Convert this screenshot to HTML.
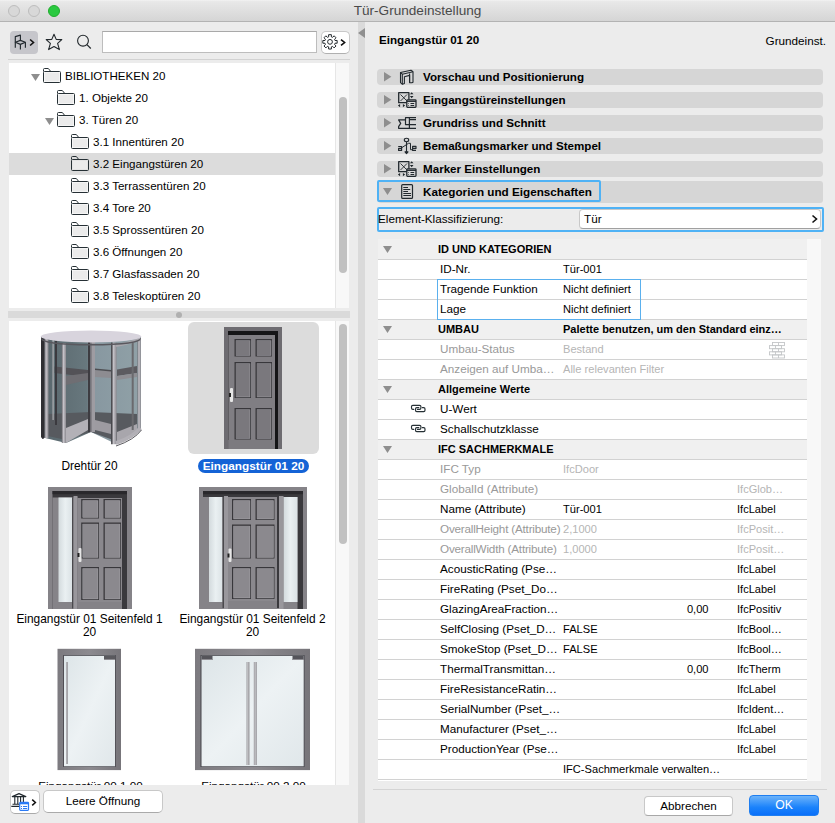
<!DOCTYPE html><html><head><meta charset="utf-8"><title>Tür-Grundeinstellung</title><style>
*{margin:0;padding:0;box-sizing:border-box}
html,body{width:835px;height:823px;overflow:hidden}
body{background:#ececec;font-family:"Liberation Sans",sans-serif;color:#000;position:relative;font-size:11.7px}
.a{position:absolute;white-space:nowrap}
.t{position:absolute;white-space:nowrap;line-height:20px}
svg{position:absolute;overflow:visible}
</style></head><body>
<div class="a" style="left:0;top:0;width:835px;height:22px;background:linear-gradient(#f3f3f3,#e8e8e8 8%,#d5d5d5);border-bottom:1px solid #b3b3b3"></div>
<div class="a" style="left:8px;top:5px;width:12px;height:12px;border-radius:50%;background:#d8d8d8;border:1px solid #bdbdbd"></div>
<div class="a" style="left:28px;top:5px;width:12px;height:12px;border-radius:50%;background:#d8d8d8;border:1px solid #bdbdbd"></div>
<div class="a" style="left:48px;top:5px;width:12px;height:12px;border-radius:50%;background:#2ac940;border:1px solid #1fad2c"></div>
<div class="a" style="left:0;top:0;width:835px;line-height:22px;text-align:center;font-size:13.6px;color:#4a4a4a">Tür-Grundeinstellung</div>
<div class="a" style="left:10px;top:31px;width:28px;height:23px;border-radius:4px;background:#c6c6cb"></div>
<svg style="left:10px;top:31px" width="28" height="23" viewBox="0 0 28 23"><g fill="none" stroke="#22292e" stroke-width="1.15" stroke-linejoin="round"><path d="M5.3 11.2V5.6L10.4 4.1V9.4"/><path d="M5.3 11.2L10.4 9.4L15.4 11.2L10.4 13.4Z"/><path d="M5.3 11.2V16.7M10.4 13.4V18.6M15.4 11.2V16.7"/></g><path d="M20.1 8.5L23.5 11.5L20.1 14.5" fill="none" stroke="#111" stroke-width="1.6"/></svg>
<svg style="left:44px;top:32px" width="20" height="20" viewBox="0 0 20 20"><path d="M10 2.2L12.2 7.4L17.8 7.6L13.6 11.4L15.4 17.6L10 14.5L4.6 17.6L6.4 11.4L2.2 7.6L7.8 7.4Z" fill="none" stroke="#22282c" stroke-width="1.1" stroke-linejoin="round"/></svg>
<svg style="left:74px;top:32px" width="20" height="20" viewBox="0 0 20 20"><circle cx="9" cy="8.7" r="5.4" fill="none" stroke="#22282c" stroke-width="1.1"/><path d="M12.9 12.6L16.8 16.5" stroke="#22282c" stroke-width="1.2"/></svg>
<div class="a" style="left:102px;top:31px;width:215px;height:22px;background:#fff;border:1px solid #bdbdbd;border-top-color:#a9a9a9"></div>
<div class="a" style="left:320.5px;top:30.5px;width:29px;height:23px;border-radius:5px;background:#fff;border:1px solid #c8c8c8;border-bottom-color:#b0b0b0"></div>
<svg style="left:321px;top:31px" width="28" height="23" viewBox="0 0 28 23"><g fill="none" stroke="#22282c" stroke-width="1"><circle cx="9" cy="10.85" r="2.4"/><path d="M7.01 6.04 L7.65 5.83 L7.61 3.68 L10.39 3.68 L10.35 5.83 L10.99 6.05 L11.60 6.35 L13.08 4.80 L15.05 6.77 L13.50 8.25 L13.81 8.86 L14.02 9.50 L16.17 9.46 L16.17 12.24 L14.02 12.20 L13.80 12.84 L13.50 13.45 L15.05 14.93 L13.08 16.90 L11.60 15.35 L10.99 15.66 L10.35 15.87 L10.39 18.02 L7.61 18.02 L7.65 15.87 L7.01 15.65 L6.40 15.35 L4.92 16.90 L2.95 14.93 L4.50 13.45 L4.19 12.84 L3.98 12.20 L1.83 12.24 L1.83 9.46 L3.98 9.50 L4.20 8.86 L4.50 8.25 L2.95 6.77 L4.92 4.80 L6.40 6.35Z"/></g><path d="M20 8.6L23.6 11.5L20 14.4" fill="none" stroke="#111" stroke-width="1.6"/></svg>
<div class="a" style="left:8px;top:59px;width:342px;height:1px;background:#d2d2d2"></div>
<div class="a" style="left:9px;top:63px;width:327px;height:245px;background:#fff"></div>
<div class="a" style="left:335px;top:63px;width:14px;height:245px;background:#f8f8f8;border-left:1px solid #e6e6e6"></div>
<div class="a" style="left:339px;top:97px;width:8px;height:176px;border-radius:4px;background:#c1c1c1"></div>
<div class="a" style="left:9px;top:153px;width:326px;height:22px;background:#dcdcdc"></div>
<svg style="left:43px;top:68px" width="18" height="15" viewBox="0 0 18 15"><rect x="1.5" y="4.5" width="15" height="9" fill="#ebebeb"/><g fill="none" stroke="#263035" stroke-width="1"><path d="M0.5 3.5V1.5Q0.5 0.5 1.5 0.5H5.3L7.8 3.5"/><rect x="0.5" y="3.5" width="17" height="11" rx="1"/></g></svg>
<svg style="left:30.5px;top:73.5px" width="9" height="7"><path d="M0 0H9L4.5 7Z" fill="#8e8e8e"/></svg>
<div class="a" style="left:65px;top:65px;line-height:22px;font-size:11.6px">BIBLIOTHEKEN 20</div>
<svg style="left:57px;top:90px" width="18" height="15" viewBox="0 0 18 15"><rect x="1.5" y="4.5" width="15" height="9" fill="#ebebeb"/><g fill="none" stroke="#263035" stroke-width="1"><path d="M0.5 3.5V1.5Q0.5 0.5 1.5 0.5H5.3L7.8 3.5"/><rect x="0.5" y="3.5" width="17" height="11" rx="1"/></g></svg>
<div class="a" style="left:79px;top:87px;line-height:22px;font-size:11.6px">1. Objekte 20</div>
<svg style="left:57px;top:112px" width="18" height="15" viewBox="0 0 18 15"><rect x="1.5" y="4.5" width="15" height="9" fill="#ebebeb"/><g fill="none" stroke="#263035" stroke-width="1"><path d="M0.5 3.5V1.5Q0.5 0.5 1.5 0.5H5.3L7.8 3.5"/><rect x="0.5" y="3.5" width="17" height="11" rx="1"/></g></svg>
<svg style="left:44.5px;top:117.5px" width="9" height="7"><path d="M0 0H9L4.5 7Z" fill="#8e8e8e"/></svg>
<div class="a" style="left:79px;top:109px;line-height:22px;font-size:11.6px">3. Türen 20</div>
<svg style="left:71px;top:134px" width="18" height="15" viewBox="0 0 18 15"><rect x="1.5" y="4.5" width="15" height="9" fill="#ebebeb"/><g fill="none" stroke="#263035" stroke-width="1"><path d="M0.5 3.5V1.5Q0.5 0.5 1.5 0.5H5.3L7.8 3.5"/><rect x="0.5" y="3.5" width="17" height="11" rx="1"/></g></svg>
<div class="a" style="left:93px;top:131px;line-height:22px;font-size:11.6px">3.1 Innentüren 20</div>
<svg style="left:71px;top:156px" width="18" height="15" viewBox="0 0 18 15"><rect x="1.5" y="4.5" width="15" height="9" fill="#ebebeb"/><g fill="none" stroke="#263035" stroke-width="1"><path d="M0.5 3.5V1.5Q0.5 0.5 1.5 0.5H5.3L7.8 3.5"/><rect x="0.5" y="3.5" width="17" height="11" rx="1"/></g></svg>
<div class="a" style="left:93px;top:153px;line-height:22px;font-size:11.6px">3.2 Eingangstüren 20</div>
<svg style="left:71px;top:178px" width="18" height="15" viewBox="0 0 18 15"><rect x="1.5" y="4.5" width="15" height="9" fill="#ebebeb"/><g fill="none" stroke="#263035" stroke-width="1"><path d="M0.5 3.5V1.5Q0.5 0.5 1.5 0.5H5.3L7.8 3.5"/><rect x="0.5" y="3.5" width="17" height="11" rx="1"/></g></svg>
<div class="a" style="left:93px;top:175px;line-height:22px;font-size:11.6px">3.3 Terrassentüren 20</div>
<svg style="left:71px;top:200px" width="18" height="15" viewBox="0 0 18 15"><rect x="1.5" y="4.5" width="15" height="9" fill="#ebebeb"/><g fill="none" stroke="#263035" stroke-width="1"><path d="M0.5 3.5V1.5Q0.5 0.5 1.5 0.5H5.3L7.8 3.5"/><rect x="0.5" y="3.5" width="17" height="11" rx="1"/></g></svg>
<div class="a" style="left:93px;top:197px;line-height:22px;font-size:11.6px">3.4 Tore 20</div>
<svg style="left:71px;top:222px" width="18" height="15" viewBox="0 0 18 15"><rect x="1.5" y="4.5" width="15" height="9" fill="#ebebeb"/><g fill="none" stroke="#263035" stroke-width="1"><path d="M0.5 3.5V1.5Q0.5 0.5 1.5 0.5H5.3L7.8 3.5"/><rect x="0.5" y="3.5" width="17" height="11" rx="1"/></g></svg>
<div class="a" style="left:93px;top:219px;line-height:22px;font-size:11.6px">3.5 Sprossentüren 20</div>
<svg style="left:71px;top:244px" width="18" height="15" viewBox="0 0 18 15"><rect x="1.5" y="4.5" width="15" height="9" fill="#ebebeb"/><g fill="none" stroke="#263035" stroke-width="1"><path d="M0.5 3.5V1.5Q0.5 0.5 1.5 0.5H5.3L7.8 3.5"/><rect x="0.5" y="3.5" width="17" height="11" rx="1"/></g></svg>
<div class="a" style="left:93px;top:241px;line-height:22px;font-size:11.6px">3.6 Öffnungen 20</div>
<svg style="left:71px;top:266px" width="18" height="15" viewBox="0 0 18 15"><rect x="1.5" y="4.5" width="15" height="9" fill="#ebebeb"/><g fill="none" stroke="#263035" stroke-width="1"><path d="M0.5 3.5V1.5Q0.5 0.5 1.5 0.5H5.3L7.8 3.5"/><rect x="0.5" y="3.5" width="17" height="11" rx="1"/></g></svg>
<div class="a" style="left:93px;top:263px;line-height:22px;font-size:11.6px">3.7 Glasfassaden 20</div>
<svg style="left:71px;top:288px" width="18" height="15" viewBox="0 0 18 15"><rect x="1.5" y="4.5" width="15" height="9" fill="#ebebeb"/><g fill="none" stroke="#263035" stroke-width="1"><path d="M0.5 3.5V1.5Q0.5 0.5 1.5 0.5H5.3L7.8 3.5"/><rect x="0.5" y="3.5" width="17" height="11" rx="1"/></g></svg>
<div class="a" style="left:93px;top:285px;line-height:22px;font-size:11.6px">3.8 Teleskoptüren 20</div>
<div class="a" style="left:8px;top:311px;width:342px;height:7px;background:#dadada"></div>
<div class="a" style="left:176px;top:311px;width:6px;height:6px;border-radius:50%;background:#b0b0b0;top:311.5px"></div>
<div class="a" style="left:9px;top:321px;width:327px;height:464px;background:#fff"></div>
<div class="a" style="left:335px;top:321px;width:14px;height:464px;background:#f8f8f8;border-left:1px solid #e6e6e6"></div>
<div class="a" style="left:339px;top:324px;width:8px;height:220px;border-radius:4px;background:#c1c1c1"></div>
<div class="a" style="left:187.7px;top:322px;width:131.6px;height:131.5px;border-radius:6px;background:#dcdcdc"></div>
<div class="a" style="left:8px;top:459px;width:163px;text-align:center;line-height:14px;font-size:11.9px">Drehtür 20</div>
<div class="a" style="left:198px;top:459.3px;width:111px;height:13.4px;border-radius:7px;background:#1463d6"></div>
<div class="a" style="left:172px;top:459.6px;width:163px;text-align:center;line-height:13px;color:#fff;font-weight:bold;font-size:11.8px">Eingangstür 01 20</div>
<div class="a" style="left:8px;top:613px;width:163px;text-align:center;line-height:13.2px;white-space:normal;font-size:11.9px">Eingangstür 01 Seitenfeld 1<br>20</div>
<div class="a" style="left:171px;top:613px;width:163px;text-align:center;line-height:13.2px;white-space:normal;font-size:11.9px">Eingangstür 01 Seitenfeld 2<br>20</div>
<div class="a" style="left:9px;top:321px;width:327px;height:464px;overflow:hidden"><div class="a" style="left:0;top:458px;width:163px;text-align:center;line-height:14px">Eingangstür 00 1 00</div><div class="a" style="left:163px;top:458px;width:163px;text-align:center;line-height:14px">Eingangstür 00 2 00</div></div>
<svg style="left:0;top:0" width="835" height="823" viewBox="0 0 835 823"><linearGradient id="dg" x1="0" x2="1"><stop offset="0" stop-color="#58666c"/><stop offset="0.46" stop-color="#68787e"/><stop offset="0.5" stop-color="#8797a0"/><stop offset="1" stop-color="#90a1a7"/></linearGradient><linearGradient id="pg" x1="0" x2="1"><stop offset="0" stop-color="#6e6c72"/><stop offset="0.4" stop-color="#c4c2c8"/><stop offset="1" stop-color="#8c8a90"/></linearGradient><path d="M41 337V437L66 443L91 432L116 444Q132 438 141 430V337Z" fill="url(#dg)"/><path d="M48 414L91 412L137 414V428Q120 440 116 441L91 432L66 440L48 436Z" fill="#575a5f"/><path d="M54.5 366.5L88 370V377L54.5 373Z" fill="#535257"/><path d="M66 376L88 373V380L66 385Z" fill="#6f6e73"/><path d="M95 370L111 371V378L95 377Z" fill="#8d8c91"/><path d="M95 368.5L111 370V371.5L95 370Z" fill="#4e4e52"/><path d="M117 369.5L137 366V373L117 376Z" fill="#5c5b60"/><path d="M117 376L137 373V377L117 380Z" fill="#8e8d92"/><rect x="88" y="341" width="2.5" height="91" fill="#3d3c41"/><rect x="90.5" y="341" width="4.5" height="91" fill="#9e9ca2"/><rect x="90.5" y="341" width="1" height="91" fill="#6a696e"/><path d="M66 428L88 419V430L66 443Z" fill="#b3b1b7"/><path d="M95 420L111 424V434L95 430Z" fill="#9d9ba1"/><path d="M117 432L137 424V430Q130 438 117 442Z" fill="#a8a6ac"/><path d="M41 337H44.5V436Q44.5 439 42.5 439L41 437Z" fill="#2f2f33"/><rect x="44.5" y="338" width="4" height="100" fill="url(#pg)"/><rect x="52.5" y="340" width="1.2" height="80" fill="#b0b0b4"/><rect x="55" y="341" width="2" height="84" fill="#3b3a3f"/><rect x="61.8" y="343" width="4.2" height="100" fill="url(#pg)"/><rect x="111.3" y="342.6" width="5.3" height="101.6" fill="url(#pg)"/><rect x="111.3" y="342.6" width="1" height="101.6" fill="#3a393e"/><rect x="131.7" y="342" width="2" height="88" fill="#6a6a6e"/><rect x="137.5" y="338" width="3.3" height="92" fill="url(#pg)"/><path d="M116 443Q132 438 140.5 428" fill="none" stroke="#b2b0b6" stroke-width="3.5"/><path d="M116 446Q134 440 141.5 430" fill="none" stroke="#5a595e" stroke-width="1"/><path d="M116 345.5Q131 343 140.5 338.5" fill="none" stroke="#a9a7ad" stroke-width="3"/><path d="M41 337Q41 344 91 344Q141 344 141 337V338.6Q141 345.6 91 345.6Q41 345.6 41 338.6Z" fill="#59585e"/><ellipse cx="91" cy="336.5" rx="50.3" ry="6" fill="#d8d4dd"/><rect x="224" y="327" width="58" height="122" fill="#6e6c71"/><rect x="228" y="331" width="50" height="118" fill="#151517"/><rect x="228.3" y="335" width="46.69999999999999" height="114" fill="#807e83"/><rect x="234.5" y="339" width="16.5" height="17.5" fill="#38373b"/><rect x="235.9" y="340.4" width="14.3" height="15.3" fill="#9b999e"/><rect x="235.9" y="340.4" width="13.7" height="14.7" fill="#7a787d"/><rect x="255.5" y="339" width="16.5" height="17.5" fill="#38373b"/><rect x="256.9" y="340.4" width="14.3" height="15.3" fill="#9b999e"/><rect x="256.9" y="340.4" width="13.7" height="14.7" fill="#7a787d"/><rect x="234.5" y="362" width="16.5" height="36" fill="#38373b"/><rect x="235.9" y="363.4" width="14.3" height="33.8" fill="#9b999e"/><rect x="235.9" y="363.4" width="13.7" height="33.2" fill="#7a787d"/><rect x="255.5" y="362" width="16.5" height="36" fill="#38373b"/><rect x="256.9" y="363.4" width="14.3" height="33.8" fill="#9b999e"/><rect x="256.9" y="363.4" width="13.7" height="33.2" fill="#7a787d"/><rect x="234.5" y="408" width="16.5" height="31.5" fill="#38373b"/><rect x="235.9" y="409.4" width="14.3" height="29.3" fill="#9b999e"/><rect x="235.9" y="409.4" width="13.7" height="28.7" fill="#7a787d"/><rect x="255.5" y="408" width="16.5" height="31.5" fill="#38373b"/><rect x="256.9" y="409.4" width="14.3" height="29.3" fill="#9b999e"/><rect x="256.9" y="409.4" width="13.7" height="28.7" fill="#7a787d"/><rect x="230" y="388" width="3" height="14" rx="1" fill="#e6e6e6"/><rect x="229" y="393" width="2" height="4" fill="#222"/><rect x="228.3" y="440" width="46.7" height="9" fill="#7c7a7f"/><rect x="48" y="487" width="84" height="122" fill="#858388"/><rect x="52.5" y="491" width="74.5" height="118" fill="#3a393d"/><rect x="52.5" y="491" width="74.5" height="3.2" fill="#29282c"/><rect x="52.5" y="497.5" width="25" height="111.5" fill="#858388"/><linearGradient id="gl" x1="0" x2="1"><stop offset="0" stop-color="#d3dadd"/><stop offset="0.5" stop-color="#eaf0f2"/><stop offset="1" stop-color="#dbe2e5"/></linearGradient><rect x="58.5" y="497.5" width="13.5" height="104.5" fill="url(#gl)"/><rect x="72" y="497.5" width="1.5" height="111" fill="#4a494d"/><rect x="73.5" y="496" width="4" height="113" fill="#99979c"/><rect x="77.5" y="498" width="44.5" height="108" fill="#8a888d"/><rect x="81.2" y="499" width="17.799999999999997" height="19.5" fill="#38373b"/><rect x="82.60000000000001" y="500.4" width="15.599999999999998" height="17.3" fill="#a3a1a6"/><rect x="82.60000000000001" y="500.4" width="14.999999999999996" height="16.7" fill="#8b898e"/><rect x="103.5" y="499" width="17.5" height="19.5" fill="#38373b"/><rect x="104.9" y="500.4" width="15.3" height="17.3" fill="#a3a1a6"/><rect x="104.9" y="500.4" width="14.7" height="16.7" fill="#8b898e"/><rect x="81.2" y="522.5" width="17.799999999999997" height="36.0" fill="#38373b"/><rect x="82.60000000000001" y="523.9" width="15.599999999999998" height="33.8" fill="#a3a1a6"/><rect x="82.60000000000001" y="523.9" width="14.999999999999996" height="33.2" fill="#8b898e"/><rect x="103.5" y="522.5" width="17.5" height="36.0" fill="#38373b"/><rect x="104.9" y="523.9" width="15.3" height="33.8" fill="#a3a1a6"/><rect x="104.9" y="523.9" width="14.7" height="33.2" fill="#8b898e"/><rect x="81.2" y="567" width="17.799999999999997" height="33" fill="#38373b"/><rect x="82.60000000000001" y="568.4" width="15.599999999999998" height="30.8" fill="#a3a1a6"/><rect x="82.60000000000001" y="568.4" width="14.999999999999996" height="30.2" fill="#8b898e"/><rect x="103.5" y="567" width="17.5" height="33" fill="#38373b"/><rect x="104.9" y="568.4" width="15.3" height="30.8" fill="#a3a1a6"/><rect x="104.9" y="568.4" width="14.7" height="30.2" fill="#8b898e"/><rect x="78.5" y="548" width="3" height="14" rx="1" fill="#e6e6e6"/><rect x="77.5" y="553" width="2" height="4" fill="#222"/><rect x="77.5" y="602" width="44.5" height="7" fill="#848287"/><rect x="199" y="487" width="108" height="122" fill="#858388"/><rect x="203" y="491" width="100" height="118" fill="#3a393d"/><rect x="203" y="491" width="100" height="3.2" fill="#29282c"/><rect x="203" y="497" width="94.5" height="112" fill="#858388"/><rect x="209" y="497" width="13.5" height="105" fill="url(#gl)"/><rect x="283.5" y="497" width="14" height="105" fill="url(#gl)"/><rect x="222.5" y="497" width="1.5" height="111" fill="#4a494d"/><rect x="224" y="496" width="4" height="113" fill="#99979c"/><rect x="277" y="497" width="2" height="111" fill="#3a393d"/><rect x="279" y="496" width="4.5" height="113" fill="#99979c"/><rect x="228" y="497" width="49" height="110" fill="#8a888d"/><rect x="232" y="499" width="19" height="21" fill="#38373b"/><rect x="233.4" y="500.4" width="16.8" height="18.8" fill="#a3a1a6"/><rect x="233.4" y="500.4" width="16.2" height="18.2" fill="#8b898e"/><rect x="255.5" y="499" width="19.0" height="21" fill="#38373b"/><rect x="256.9" y="500.4" width="16.8" height="18.8" fill="#a3a1a6"/><rect x="256.9" y="500.4" width="16.2" height="18.2" fill="#8b898e"/><rect x="232" y="524.5" width="19" height="34.0" fill="#38373b"/><rect x="233.4" y="525.9" width="16.8" height="31.8" fill="#a3a1a6"/><rect x="233.4" y="525.9" width="16.2" height="31.2" fill="#8b898e"/><rect x="255.5" y="524.5" width="19.0" height="34.0" fill="#38373b"/><rect x="256.9" y="525.9" width="16.8" height="31.8" fill="#a3a1a6"/><rect x="256.9" y="525.9" width="16.2" height="31.2" fill="#8b898e"/><rect x="232" y="567" width="19" height="32" fill="#38373b"/><rect x="233.4" y="568.4" width="16.8" height="29.8" fill="#a3a1a6"/><rect x="233.4" y="568.4" width="16.2" height="29.2" fill="#8b898e"/><rect x="255.5" y="567" width="19.0" height="32" fill="#38373b"/><rect x="256.9" y="568.4" width="16.8" height="29.8" fill="#a3a1a6"/><rect x="256.9" y="568.4" width="16.2" height="29.2" fill="#8b898e"/><rect x="228.5" y="548.5" width="3" height="13.5" rx="1" fill="#e6e6e6"/><rect x="227.5" y="553.5" width="2" height="4" fill="#222"/><rect x="228" y="601" width="49" height="7" fill="#848287"/><linearGradient id="fr" x1="0" x2="1"><stop offset="0" stop-color="#7c7a7f"/><stop offset="0.5" stop-color="#8c8a8f"/><stop offset="1" stop-color="#77757a"/></linearGradient><rect x="57.5" y="648.8" width="63.5" height="121.3" fill="url(#fr)"/><linearGradient id="gg" x1="0" y1="0" x2="1" y2="1"><stop offset="0" stop-color="#dde5e8"/><stop offset="0.5" stop-color="#edf2f4"/><stop offset="1" stop-color="#e0e7ea"/></linearGradient><rect x="63.2" y="655" width="52.5" height="112" fill="#45444a"/><rect x="64" y="655.8" width="51" height="110.5" fill="url(#gg)"/><rect x="66" y="662" width="2" height="102" fill="#96959a"/><rect x="66.5" y="662" width="0.8" height="102" fill="#c9c9cc"/><rect x="104" y="655.8" width="11" height="4.2" fill="#5a595e"/><rect x="104" y="659" width="11" height="1" fill="#8e8d92"/><rect x="195" y="648.8" width="115" height="121.3" fill="url(#fr)"/><rect x="200.5" y="655" width="104" height="112" fill="#45444a"/><rect x="201.5" y="655.8" width="102.2" height="110.5" fill="url(#gg)"/><rect x="246.5" y="662" width="3" height="103" fill="#98979c"/><rect x="247.3" y="662" width="1" height="103" fill="#cfcfd2"/><rect x="253.8" y="662" width="3" height="103" fill="#98979c"/><rect x="254.6" y="662" width="1" height="103" fill="#cfcfd2"/><rect x="201.5" y="655.8" width="11" height="4.2" fill="#55545a"/><rect x="201.5" y="659" width="11" height="1" fill="#8e8d92"/><rect x="292.5" y="655.8" width="11.2" height="4.2" fill="#55545a"/><rect x="292.5" y="659" width="11.2" height="1" fill="#8e8d92"/></svg>
<div class="a" style="left:9.6px;top:790px;width:30.6px;height:23.6px;border-radius:5px;background:#fff;border:1px solid #c8c8c8;border-bottom-color:#aaa"></div>
<svg style="left:0;top:0" width="835" height="823" viewBox="0 0 835 823"><g fill="none" stroke="#22292e" stroke-linejoin="round"><path d="M12.3 796.6H25.8L19 793.6Z" stroke-width="1.2"/><path d="M14.8 797V804M17.8 797V804M20.6 797V802M23.4 797V802" stroke-width="1.1"/><path d="M12.5 804.3H20M11.3 806.4H20" stroke-width="1.1"/></g><rect x="19.7" y="802.3" width="8.8" height="8" rx="0.8" fill="#fff" stroke="#2a7af5" stroke-width="1.2"/><path d="M19.7 803.6H28.5" stroke="#2a7af5" stroke-width="1.4"/><path d="M23 806.5H27.2M23 808.5H27.2M21 806.5H22M21 808.5H22" stroke="#2a7af5" stroke-width="1"/><path d="M32.2 799.6L35.4 802.5L32.2 805.4" fill="none" stroke="#111" stroke-width="1.5"/></svg>
<div class="a" style="left:43.4px;top:790.3px;width:119.2px;height:22.6px;border-radius:5px;background:#fff;border:1px solid #c8c8c8;border-bottom-color:#aaa;text-align:center;line-height:19.5px">Leere Öffnung</div>
<div class="a" style="left:358px;top:22px;width:7px;height:801px;background:#dadada"></div>
<svg style="left:358px;top:28px" width="7" height="10"><path d="M7 0V10L0 5Z" fill="#909090"/></svg>
<div class="a" style="left:379px;top:31px;line-height:18px;font-weight:bold;font-size:11.65px">Eingangstür 01 20</div>
<div class="a" style="left:700px;top:32px;width:126px;text-align:right;line-height:18px">Grundeinst.</div>
<div class="a" style="left:377px;top:69px;width:446px;height:16px;border-radius:4px;background:#d6d6d6"></div>
<svg style="left:383.8px;top:71.60000000000001px" width="7.4" height="9.6"><path d="M0 0L7.4 4.8L0 9.6Z" fill="#8e8e8e"/></svg>
<div class="a" style="left:423px;top:69px;line-height:16px;font-weight:bold;font-size:11.62px">Vorschau und Positionierung</div>
<div class="a" style="left:377px;top:92px;width:446px;height:16px;border-radius:4px;background:#d6d6d6"></div>
<svg style="left:383.8px;top:94.60000000000001px" width="7.4" height="9.6"><path d="M0 0L7.4 4.8L0 9.6Z" fill="#8e8e8e"/></svg>
<div class="a" style="left:423px;top:92px;line-height:16px;font-weight:bold;font-size:11.62px">Eingangstüreinstellungen</div>
<div class="a" style="left:377px;top:115px;width:446px;height:16px;border-radius:4px;background:#d6d6d6"></div>
<svg style="left:383.8px;top:117.60000000000001px" width="7.4" height="9.6"><path d="M0 0L7.4 4.8L0 9.6Z" fill="#8e8e8e"/></svg>
<div class="a" style="left:423px;top:115px;line-height:16px;font-weight:bold;font-size:11.62px">Grundriss und Schnitt</div>
<div class="a" style="left:377px;top:138px;width:446px;height:16px;border-radius:4px;background:#d6d6d6"></div>
<svg style="left:383.8px;top:140.6px" width="7.4" height="9.6"><path d="M0 0L7.4 4.8L0 9.6Z" fill="#8e8e8e"/></svg>
<div class="a" style="left:423px;top:138px;line-height:16px;font-weight:bold;font-size:11.62px">Bemaßungsmarker und Stempel</div>
<div class="a" style="left:377px;top:161px;width:446px;height:16px;border-radius:4px;background:#d6d6d6"></div>
<svg style="left:383.8px;top:163.6px" width="7.4" height="9.6"><path d="M0 0L7.4 4.8L0 9.6Z" fill="#8e8e8e"/></svg>
<div class="a" style="left:423px;top:161px;line-height:16px;font-weight:bold;font-size:11.62px">Marker Einstellungen</div>
<div class="a" style="left:378px;top:181px;width:445px;height:22px;border-radius:3px;background:#d6d6d6"></div>
<div class="a" style="left:377px;top:180px;width:224px;height:22px;border:2px solid #4fb2f5;border-radius:2px"></div>
<svg style="left:383.0px;top:187.5px" width="9" height="7"><path d="M0 0H9L4.5 7Z" fill="#8e8e8e"/></svg>
<div class="a" style="left:423px;top:181px;line-height:22px;font-weight:bold;font-size:11.7px">Kategorien und Eigenschaften</div>
<svg style="left:0;top:0" width="835" height="823" viewBox="0 0 835 823"><g fill="none" stroke="#22292e" stroke-width="1.1" stroke-linejoin="round"><path d="M400.5 72.5L411 70.2L413 71.8V82.2L411.8 82.8L409.6 82.6V75.4L404.4 76.7V83.6L402.5 84.3L400.5 82.6Z"/><path d="M402.3 84.2V74.2L413 71.8M402.3 74.2L400.5 72.5"/><path d="M409.6 73.4V82.6"/><rect x="398.7" y="92.7" width="10.2" height="10" stroke-width="1.3"/><path d="M400.5 101L407 94.5M400.5 94.5L407 101" stroke-width="0.9"/><rect x="406.8" y="99.8" width="9.2" height="7.5" rx="0.8" fill="#d9d9d9" stroke-width="1.3"/><path d="M406.8 101.3H416" stroke-width="1.3"/><path d="M410.5 103.5H414.2M410.5 105.5H414.2" stroke-width="1"/><path d="M408.4 103.5H409M408.4 105.5H409" stroke-width="1"/></g><path d="M409.9 94.3L411.7 92.2L413.5 94.3ZM409.9 96.1H413.5L411.7 98.2ZM397.9 105.6L400.1 104V107.2ZM405.1 105.6L402.9 104V107.2Z" fill="#22292e"/><g fill="none" stroke="#22292e" stroke-width="1.1" stroke-linejoin="round"><rect x="398.7" y="161.7" width="10.2" height="10" stroke-width="1.3"/><path d="M400.5 170L407 163.5M400.5 163.5L407 170" stroke-width="0.9"/><rect x="406.8" y="168.8" width="9.2" height="7.5" rx="0.8" fill="#d9d9d9" stroke-width="1.3"/><path d="M406.8 170.3H416" stroke-width="1.3"/><path d="M410.5 172.5H414.2M410.5 174.5H414.2" stroke-width="1"/><path d="M408.4 172.5H409M408.4 174.5H409" stroke-width="1"/></g><path d="M409.9 163.3L411.7 161.2L413.5 163.3ZM409.9 165.1H413.5L411.7 167.2ZM397.9 174.6L400.1 173V176.2ZM405.1 174.6L402.9 173V176.2Z" fill="#22292e"/><g fill="none" stroke="#22292e" stroke-width="1.1" stroke-linejoin="round"><path d="M416 117.7H405.5V124.6H416M409.4 117.7V128.3M416 119.6H409.4M405.5 119.9H398.6L400.7 123.4L398.6 126.6V128.3H416" stroke-width="1.2"/><ellipse cx="406.5" cy="140" rx="2.2" ry="1.7"/><path d="M406.5 141.7V152.5"/><path d="M405 151.8L406.5 153.6L408 151.8Z" fill="#22292e"/><path d="M401.6 147.8L408.5 143.3H410.5V149.7H412.2" stroke-width="1"/><path d="M398.2 146.5H401.6V150.4H398.6V148.4H401.6" stroke-width="1.15"/><path d="M416 150.4H412.6V146.4H416V148.4H412.6" stroke-width="1.15"/><rect x="401.7" y="184.6" width="10.8" height="13.8" rx="1" stroke-width="1.2"/></g><path d="M403.3 187.5H408M403.3 189.5H410.2M403.3 191.5H408M403.3 193.5H411M403.3 195.5H411" stroke="#22292e" stroke-width="1"/></svg>
<div class="a" style="left:377px;top:207px;width:447px;height:25px;border:2px solid #4fb2f5;border-radius:2px"></div>
<div class="a" style="left:378px;top:209px;line-height:20px">Element-Klassifizierung:</div>
<div class="a" style="left:579px;top:209px;width:242px;height:20px;border-radius:4px;background:#fff;border:1px solid #c8c8c8;border-bottom-color:#a0a0a0"></div>
<div class="a" style="left:584px;top:209px;line-height:20px">Tür</div>
<svg style="left:811px;top:214px" width="8" height="10"><path d="M1.5 1.5L5.5 5L1.5 8.5" fill="none" stroke="#111" stroke-width="1.6"/></svg>
<div class="a" style="left:378px;top:239px;width:429px;height:542px;background:#fff"></div>
<div class="a" style="left:807px;top:239px;width:14px;height:542px;background:#f8f8f8"></div>
<div class="a" style="left:378px;top:239px;width:429px;height:20px;background:#f0f0f0"></div>
<div class="a" style="left:378px;top:259px;width:429px;height:1px;background:#d2d2d2"></div>
<svg style="left:383px;top:246px" width="9" height="7"><path d="M0 0H9L4.5 7Z" fill="#8e8e8e"/></svg>
<div class="t" style="left:438px;top:239px;font-weight:bold;font-size:11px">ID UND KATEGORIEN</div>
<div class="a" style="left:378px;top:279px;width:429px;height:1px;background:#d2d2d2"></div>
<div class="t" style="left:440px;top:259px;color:#000">ID-Nr.</div>
<div class="t" style="left:563px;top:259px;color:#000;font-size:11.1px">Tür-001</div>
<div class="a" style="left:378px;top:299px;width:429px;height:1px;background:#d2d2d2"></div>
<div class="t" style="left:440px;top:279px;color:#000">Tragende Funktion</div>
<div class="t" style="left:563px;top:279px;color:#000;font-size:11.1px">Nicht definiert</div>
<div class="a" style="left:378px;top:319px;width:429px;height:1px;background:#d2d2d2"></div>
<div class="t" style="left:440px;top:299px;color:#000">Lage</div>
<div class="t" style="left:563px;top:299px;color:#000;font-size:11.1px">Nicht definiert</div>
<div class="a" style="left:378px;top:320px;width:429px;height:19px;background:#f0f0f0"></div>
<div class="a" style="left:378px;top:339px;width:429px;height:1px;background:#d2d2d2"></div>
<svg style="left:383px;top:326px" width="9" height="7"><path d="M0 0H9L4.5 7Z" fill="#8e8e8e"/></svg>
<div class="t" style="left:438px;top:319px;font-weight:bold;font-size:11px">UMBAU</div>
<div class="t" style="left:563px;top:319px;font-weight:bold;font-size:11px">Palette benutzen, um den Standard einz…</div>
<div class="a" style="left:378px;top:359px;width:429px;height:1px;background:#d2d2d2"></div>
<div class="t" style="left:440px;top:339px;color:#999999">Umbau-Status</div>
<div class="t" style="left:563px;top:339px;color:#b5b5b5;font-size:11.1px">Bestand</div>
<div class="a" style="left:378px;top:379px;width:429px;height:1px;background:#d2d2d2"></div>
<div class="t" style="left:440px;top:359px;color:#999999">Anzeigen auf Umba…</div>
<div class="t" style="left:563px;top:359px;color:#b5b5b5;font-size:11.1px">Alle relevanten Filter</div>
<div class="a" style="left:378px;top:380px;width:429px;height:19px;background:#f0f0f0"></div>
<div class="a" style="left:378px;top:399px;width:429px;height:1px;background:#d2d2d2"></div>
<svg style="left:383px;top:386px" width="9" height="7"><path d="M0 0H9L4.5 7Z" fill="#8e8e8e"/></svg>
<div class="t" style="left:438px;top:379px;font-weight:bold;font-size:11px">Allgemeine Werte</div>
<div class="a" style="left:378px;top:419px;width:429px;height:1px;background:#d2d2d2"></div>
<svg style="left:411px;top:404px" width="15" height="9" viewBox="0 0 15 9"><g fill="none" stroke="#263035" stroke-width="1.15" stroke-linecap="round"><path d="M2.7 5.4H1.8Q0.5 5.4 0.5 4.1V2.6Q0.5 1.3 1.8 1.3H8.6Q9.9 1.3 9.9 2.6V4.1Q9.9 5.4 8.6 5.4H6.4"/><path d="M7.8 3.6H5.8Q4.5 3.6 4.5 4.9V6.3Q4.5 7.6 5.8 7.6H12.7Q14 7.6 14 6.3V4.9Q14 3.6 12.7 3.6H11.3"/></g></svg>
<div class="t" style="left:440px;top:399px;color:#000">U-Wert</div>
<div class="a" style="left:378px;top:439px;width:429px;height:1px;background:#d2d2d2"></div>
<svg style="left:411px;top:424px" width="15" height="9" viewBox="0 0 15 9"><g fill="none" stroke="#263035" stroke-width="1.15" stroke-linecap="round"><path d="M2.7 5.4H1.8Q0.5 5.4 0.5 4.1V2.6Q0.5 1.3 1.8 1.3H8.6Q9.9 1.3 9.9 2.6V4.1Q9.9 5.4 8.6 5.4H6.4"/><path d="M7.8 3.6H5.8Q4.5 3.6 4.5 4.9V6.3Q4.5 7.6 5.8 7.6H12.7Q14 7.6 14 6.3V4.9Q14 3.6 12.7 3.6H11.3"/></g></svg>
<div class="t" style="left:440px;top:419px;color:#000">Schallschutzklasse</div>
<div class="a" style="left:378px;top:440px;width:429px;height:19px;background:#f0f0f0"></div>
<div class="a" style="left:378px;top:459px;width:429px;height:1px;background:#d2d2d2"></div>
<svg style="left:383px;top:446px" width="9" height="7"><path d="M0 0H9L4.5 7Z" fill="#8e8e8e"/></svg>
<div class="t" style="left:438px;top:439px;font-weight:bold;font-size:11px">IFC SACHMERKMALE</div>
<div class="a" style="left:378px;top:479px;width:429px;height:1px;background:#d2d2d2"></div>
<div class="t" style="left:440px;top:459px;color:#999999">IFC Typ</div>
<div class="t" style="left:563px;top:459px;color:#b5b5b5;font-size:11.1px">IfcDoor</div>
<div class="a" style="left:378px;top:499px;width:429px;height:1px;background:#d2d2d2"></div>
<div class="t" style="left:440px;top:479px;color:#999999">GlobalId (Attribute)</div>
<div class="t" style="left:737px;top:479px;color:#b5b5b5;font-size:11.05px">IfcGlob…</div>
<div class="a" style="left:378px;top:519px;width:429px;height:1px;background:#d2d2d2"></div>
<div class="t" style="left:440px;top:499px;color:#000">Name (Attribute)</div>
<div class="t" style="left:563px;top:499px;color:#000;font-size:11.1px">Tür-001</div>
<div class="t" style="left:737px;top:499px;color:#000;font-size:11.05px">IfcLabel</div>
<div class="a" style="left:378px;top:539px;width:429px;height:1px;background:#d2d2d2"></div>
<div class="t" style="left:440px;top:519px;color:#999999;letter-spacing:-0.2px">OverallHeight (Attribute)</div>
<div class="t" style="left:563px;top:519px;color:#b5b5b5;font-size:11.1px">2,1000</div>
<div class="t" style="left:737px;top:519px;color:#b5b5b5;font-size:11.05px">IfcPosit…</div>
<div class="a" style="left:378px;top:559px;width:429px;height:1px;background:#d2d2d2"></div>
<div class="t" style="left:440px;top:539px;color:#999999;letter-spacing:-0.2px">OverallWidth (Attribute)</div>
<div class="t" style="left:563px;top:539px;color:#b5b5b5;font-size:11.1px">1,0000</div>
<div class="t" style="left:737px;top:539px;color:#b5b5b5;font-size:11.05px">IfcPosit…</div>
<div class="a" style="left:378px;top:579px;width:429px;height:1px;background:#d2d2d2"></div>
<div class="t" style="left:440px;top:559px;color:#000">AcousticRating (Pse…</div>
<div class="t" style="left:737px;top:559px;color:#000;font-size:11.05px">IfcLabel</div>
<div class="a" style="left:378px;top:599px;width:429px;height:1px;background:#d2d2d2"></div>
<div class="t" style="left:440px;top:579px;color:#000">FireRating (Pset_Do…</div>
<div class="t" style="left:737px;top:579px;color:#000;font-size:11.05px">IfcLabel</div>
<div class="a" style="left:378px;top:619px;width:429px;height:1px;background:#d2d2d2"></div>
<div class="t" style="left:440px;top:599px;color:#000">GlazingAreaFraction…</div>
<div class="t" style="left:600px;width:108.5px;text-align:right;top:599px;font-size:11.1px">0,00</div>
<div class="t" style="left:737px;top:599px;color:#000;font-size:11.05px">IfcPositiv</div>
<div class="a" style="left:378px;top:639px;width:429px;height:1px;background:#d2d2d2"></div>
<div class="t" style="left:440px;top:619px;color:#000">SelfClosing (Pset_D…</div>
<div class="t" style="left:563px;top:619px;color:#000;font-size:11.1px">FALSE</div>
<div class="t" style="left:737px;top:619px;color:#000;font-size:11.05px">IfcBool…</div>
<div class="a" style="left:378px;top:659px;width:429px;height:1px;background:#d2d2d2"></div>
<div class="t" style="left:440px;top:639px;color:#000">SmokeStop (Pset_D…</div>
<div class="t" style="left:563px;top:639px;color:#000;font-size:11.1px">FALSE</div>
<div class="t" style="left:737px;top:639px;color:#000;font-size:11.05px">IfcBool…</div>
<div class="a" style="left:378px;top:679px;width:429px;height:1px;background:#d2d2d2"></div>
<div class="t" style="left:440px;top:659px;color:#000">ThermalTransmittan…</div>
<div class="t" style="left:600px;width:108.5px;text-align:right;top:659px;font-size:11.1px">0,00</div>
<div class="t" style="left:737px;top:659px;color:#000;font-size:11.05px">IfcTherm</div>
<div class="a" style="left:378px;top:699px;width:429px;height:1px;background:#d2d2d2"></div>
<div class="t" style="left:440px;top:679px;color:#000">FireResistanceRatin…</div>
<div class="t" style="left:737px;top:679px;color:#000;font-size:11.05px">IfcLabel</div>
<div class="a" style="left:378px;top:719px;width:429px;height:1px;background:#d2d2d2"></div>
<div class="t" style="left:440px;top:699px;color:#000">SerialNumber (Pset_…</div>
<div class="t" style="left:737px;top:699px;color:#000;font-size:11.05px">IfcIdent…</div>
<div class="a" style="left:378px;top:739px;width:429px;height:1px;background:#d2d2d2"></div>
<div class="t" style="left:440px;top:719px;color:#000">Manufacturer (Pset_…</div>
<div class="t" style="left:737px;top:719px;color:#000;font-size:11.05px">IfcLabel</div>
<div class="a" style="left:378px;top:759px;width:429px;height:1px;background:#d2d2d2"></div>
<div class="t" style="left:440px;top:739px;color:#000">ProductionYear (Pse…</div>
<div class="t" style="left:737px;top:739px;color:#000;font-size:11.05px">IfcLabel</div>
<div class="a" style="left:378px;top:779px;width:429px;height:1px;background:#d2d2d2"></div>
<div class="t" style="left:563px;top:759px;color:#000;font-size:11.1px">IFC-Sachmerkmale verwalten…</div>
<div class="a" style="left:437px;top:279px;width:204px;height:41px;border:1px solid #5ab0ee"></div>
<svg style="left:769px;top:342px" width="17" height="17" viewBox="0 0 17 17"><g fill="none" stroke="#c4c6c8" stroke-width="0.9"><rect x="3.5" y="0.5" width="12.0" height="3.1"/><path d="M9.5 0.5V3.6"/><rect x="0.5" y="3.6" width="12.0" height="3.1"/><path d="M6.5 3.6V6.7"/><rect x="3.5" y="6.7" width="12.0" height="3.1"/><path d="M9.5 6.7V9.8"/><rect x="0.5" y="9.8" width="12.0" height="3.1"/><path d="M6.5 9.8V12.9"/><rect x="3.5" y="12.9" width="12.0" height="3.1"/><path d="M9.5 12.9V16.0"/></g></svg>
<div class="a" style="left:373px;top:789px;width:454px;height:1px;background:#d4d4d4"></div>
<div class="a" style="left:644px;top:796px;width:89px;height:20px;border-radius:4px;background:#fff;border:1px solid #c8c8c8;border-bottom-color:#a8a8a8;text-align:center;line-height:17px">Abbrechen</div>
<div class="a" style="left:749px;top:795px;width:70px;height:21px;border-radius:4px;background:linear-gradient(#6cb3fa,#1a82fb 60%,#0a6ff9);border:1px solid #1f7ef0;color:#fff;text-align:center;line-height:19px;font-size:12.2px">OK</div>
</body></html>
